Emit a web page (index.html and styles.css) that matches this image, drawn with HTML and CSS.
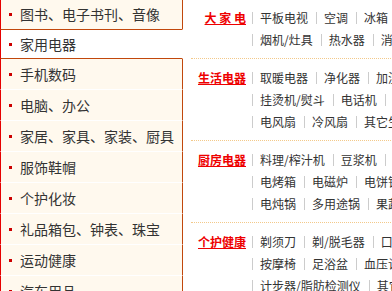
FILE: index.html
```html
<!DOCTYPE html>
<html>
<head>
    <meta charset="utf-8">
    <link rel="stylesheet" href="styles.css">
</head>
<body>
    <div class="menu">
        <ul class="cat-list">
            <li><span class="dot"></span>图书、电子书刊、音像</li>
            <li class="active"><span class="dot"></span>家用电器</li>
            <li><span class="dot"></span>手机数码</li>
            <li><span class="dot"></span>电脑、办公</li>
            <li><span class="dot"></span>家居、家具、家装、厨具</li>
            <li><span class="dot"></span>服饰鞋帽</li>
            <li><span class="dot"></span>个护化妆</li>
            <li><span class="dot"></span>礼品箱包、钟表、珠宝</li>
            <li><span class="dot"></span>运动健康</li>
            <li><span class="dot"></span>汽车用品</li>
        </ul>

        <div class="sub-panel">
            <div class="cat-row">
                <a class="cat-label" href="#">大 家 电</a>
                <div class="cat-items">
                    <div class="line"><a href="#">平板电视</a><a href="#">空调</a><a href="#">冰箱</a><a href="#">洗衣机</a></div>
                    <div class="line"><a href="#">烟机/灶具</a><a href="#">热水器</a><a href="#">消毒柜/洗碗机</a></div>
                </div>
            </div>
            <div class="cat-row">
                <a class="cat-label" href="#">生活电器</a>
                <div class="cat-items">
                    <div class="line"><a href="#">取暖电器</a><a href="#">净化器</a><a href="#">加湿器</a></div>
                    <div class="line"><a href="#">挂烫机/熨斗</a><a href="#">电话机</a><a href="#">饮水机</a></div>
                    <div class="line"><a href="#">电风扇</a><a href="#">冷风扇</a><a href="#">其它生活电器</a></div>
                </div>
            </div>
            <div class="cat-row">
                <a class="cat-label" href="#">厨房电器</a>
                <div class="cat-items">
                    <div class="line"><a href="#">料理/榨汁机</a><a href="#">豆浆机</a><a href="#">电饭煲</a></div>
                    <div class="line"><a href="#">电烤箱</a><a href="#">电磁炉</a><a href="#">电饼铛</a></div>
                    <div class="line"><a href="#">电炖锅</a><a href="#">多用途锅</a><a href="#">果蔬解毒机</a></div>
                </div>
            </div>
            <div class="cat-row">
                <a class="cat-label" href="#">个护健康</a>
                <div class="cat-items">
                    <div class="line"><a href="#">剃须刀</a><a href="#">剃/脱毛器</a><a href="#">口腔护理</a></div>
                    <div class="line"><a href="#">按摩椅</a><a href="#">足浴盆</a><a href="#">血压计</a></div>
                    <div class="line"><a href="#">计步器/脂肪检测仪</a><a href="#">其它健康电器</a></div>
                </div>
            </div>
        </div>
    </div>
</body>
</html>
```

FILE: styles.css
```css
* {
    margin: 0;
    padding: 0;
    box-sizing: border-box;
}

html, body {
    overflow: hidden;
}

body {
    font-family: "Noto Sans CJK SC", "Liberation Sans", sans-serif;
    color: #333;
    background: #fff;
}

a {
    color: #333;
    text-decoration: none;
}

.menu {
    display: flex;
    align-items: flex-start;
    width: 800px;
}

/* left category list */
.cat-list {
    list-style: none;
    width: 183px;
    flex: none;
    margin-top: -1px;
}

.cat-list li {
    height: 31px;
    line-height: 30px;
    font-size: 14px;
    padding-left: 8px;
    background: #fff9ee;
    border-left: 1px solid #e60000;
    border-right: 1px solid #c1470c;
    border-bottom: 1px solid #fff;
    display: flex;
    align-items: center;
    white-space: nowrap;
}

.cat-list li.active {
    height: 30px;
    margin-top: -1px;
    line-height: 28px;
    background: #fff;
    border-top: 1px solid #c1470c;
    border-bottom: 1px solid #c1470c;
    border-right-color: #fff;
}

.dot {
    width: 3px;
    height: 3px;
    background: #c00;
    margin-right: 8px;
    flex: none;
}

/* right sub panel */
.sub-panel {
    width: 560px;
    flex: none;
    padding-left: 8px;
    margin-top: -1px;
}

.cat-row {
    display: flex;
    padding: 8px 0 7px;
    border-bottom: 1px dotted #f3c98a;
}

.cat-label {
    width: 55px;
    flex: none;
    text-align: right;
    font-size: 12px;
    font-weight: 700;
    line-height: 22px;
    color: #e00;
    text-decoration: underline;
    white-space: nowrap;
}

.cat-items {
    margin-left: 6px;
}

.line {
    height: 22px;
    display: flex;
    align-items: center;
    white-space: nowrap;
}

.line a {
    font-size: 12px;
    line-height: 12px;
    padding: 0 8px 0 7px;
    border-left: 1px solid #ccc;
}
```
